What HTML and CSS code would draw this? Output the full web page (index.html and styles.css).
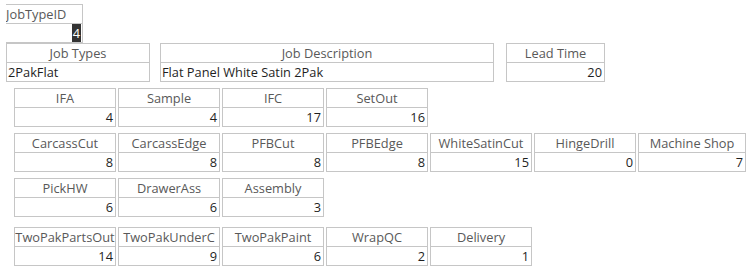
FILE: index.html
```html
<!DOCTYPE html>
<html lang="en">
<head>
    <meta charset="UTF-8">
    <title>Job Types</title>
    <link rel="stylesheet" href="styles.css">
</head>
<body>
    <div class="form">
        <div class="field id-field">
            <div class="label left">JobTypeID</div>
            <div class="value"><span class="selected">4</span></div>
        </div>

        <div class="row top-row">
            <div class="field w-type">
                <div class="label">Job Types</div>
                <div class="value left">2PakFlat</div>
            </div>
            <div class="field w-desc">
                <div class="label">Job Description</div>
                <div class="value left">Flat Panel White Satin 2Pak</div>
            </div>
            <div class="field w-lead">
                <div class="label">Lead Time</div>
                <div class="value">20</div>
            </div>
        </div>

        <div class="row steps">
            <div class="field"><div class="label">IFA</div><div class="value">4</div></div>
            <div class="field"><div class="label">Sample</div><div class="value">4</div></div>
            <div class="field"><div class="label">IFC</div><div class="value">17</div></div>
            <div class="field"><div class="label">SetOut</div><div class="value">16</div></div>
        </div>

        <div class="row steps">
            <div class="field"><div class="label">CarcassCut</div><div class="value">8</div></div>
            <div class="field"><div class="label">CarcassEdge</div><div class="value">8</div></div>
            <div class="field"><div class="label">PFBCut</div><div class="value">8</div></div>
            <div class="field"><div class="label">PFBEdge</div><div class="value">8</div></div>
            <div class="field"><div class="label">WhiteSatinCut</div><div class="value">15</div></div>
            <div class="field"><div class="label">HingeDrill</div><div class="value">0</div></div>
            <div class="field wide"><div class="label">Machine Shop</div><div class="value">7</div></div>
        </div>

        <div class="row steps">
            <div class="field"><div class="label">PickHW</div><div class="value">6</div></div>
            <div class="field"><div class="label">DrawerAss</div><div class="value">6</div></div>
            <div class="field"><div class="label">Assembly</div><div class="value">3</div></div>
        </div>

        <div class="row steps last">
            <div class="field"><div class="label">TwoPakPartsOut</div><div class="value">14</div></div>
            <div class="field"><div class="label">TwoPakUnderC</div><div class="value">9</div></div>
            <div class="field"><div class="label">TwoPakPaint</div><div class="value">6</div></div>
            <div class="field"><div class="label">WrapQC</div><div class="value">2</div></div>
            <div class="field"><div class="label">Delivery</div><div class="value">1</div></div>
        </div>
    </div>
</body>
</html>
```

FILE: styles.css
```css
* { box-sizing: border-box; margin: 0; padding: 0; }
body {
    font-family: 'Open Sans', 'Noto Sans', sans-serif;
    font-size: 12.8px;
    background-color: #FFFFFF;
    color: #1F1F1F;
}
.form { padding: 4px 0 0 6px; }
.row { display: flex; gap: 2px; }
.field { display: flex; flex-direction: column; width: 102px; }
.label, .value {
    height: 20px;
    line-height: 18px;
    border: 1px solid #C6C6C6;
    padding: 0 2px;
    white-space: nowrap;
    overflow: hidden;
}
.label { color: #595959; text-align: center; padding: 0; }
.value { border-top: none; height: 19px; text-align: right; color: #1F1F1F; }
.left { text-align: left; }

.id-field { width: 77px; }
.id-field .label { border-left: none; }
.id-field .value { border-left: none; height: 19px; padding-right: 1px; }
.selected { background-color: #333333; color: #FFFFFF; padding: 1px 1px; }

.top-row { gap: 0; }
.w-type { width: 144px; margin-right: 10px; }
.w-desc { width: 334px; margin-right: 12px; }
.w-lead { width: 99px; }
.top-row .value.left { padding-left: 1px; }

.steps { margin: 6px 0 0 8px; }
.steps.last { margin-top: 10px; }
.wide { width: 108px; }
```
